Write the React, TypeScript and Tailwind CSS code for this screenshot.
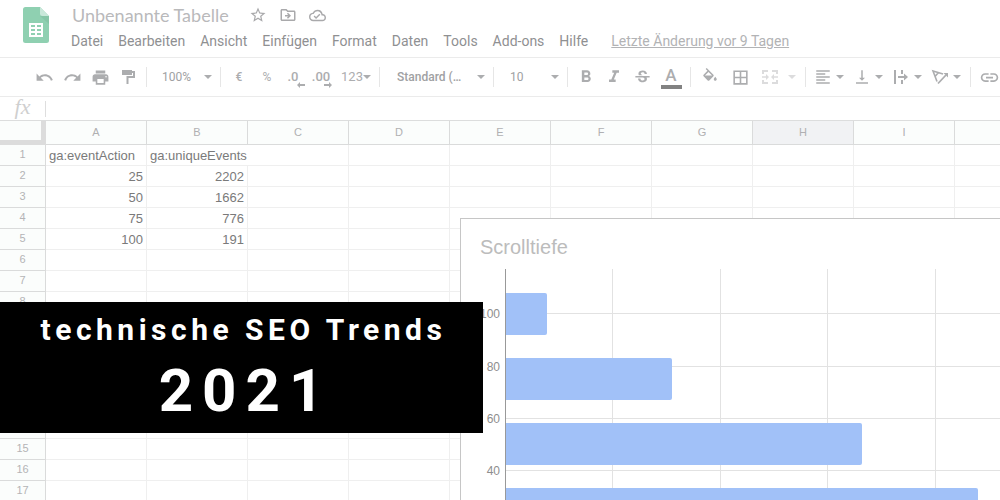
import type { ReactNode } from 'react';
import {
  MdBorderAll,
  MdFormatAlignLeft,
  MdFormatBold,
  MdFormatItalic,
  MdLink,
  MdOutlineCloudDone,
  MdOutlineDriveFileMove,
  MdPrint,
  MdRedo,
  MdStarBorder,
  MdStrikethroughS,
  MdUndo,
  MdVerticalAlignBottom,
} from 'react-icons/md';

const menus = ['Datei', 'Bearbeiten', 'Ansicht', 'Einfügen', 'Format', 'Daten', 'Tools', 'Add-ons', 'Hilfe'];
const columns = ['A', 'B', 'C', 'D', 'E', 'F', 'G', 'H', 'I', ''];
const cells = [
  ['ga:eventAction', 'ga:uniqueEvents'],
  ['25', '2202'],
  ['50', '1662'],
  ['75', '776'],
  ['100', '191'],
];
const rowCount = 17;

function SheetsLogo() {
  return (
    <svg width="26" height="36" viewBox="0 0 26 36" aria-hidden="true">
      <path d="M2.500 0H17L26 9V33.500A2.500 2.500 0 0 1 23.500 36H2.500A2.500 2.500 0 0 1 0 33.500V2.500A2.500 2.500 0 0 1 2.500 0Z" fill="#8fd0b1" />
      <path d="M17 9H26V17Z" fill="#86c6a7" />
      <path d="M17 0L26 9H19.500A2.500 2.500 0 0 1 17 6.500Z" fill="#c9e8da" />
      <path fillRule="evenodd" fill="#fff" d="M6 16H20V30H6ZM8 18V20H12V18ZM14 18V20H18V18ZM8 22V24H12V22ZM14 22V24H18V22ZM8 26V28H12V26ZM14 26V28H18V26Z" />
    </svg>
  );
}

function Caret() {
  return (
    <svg width="8" height="4" viewBox="0 0 8 4" fill="currentColor" className="shrink-0" aria-hidden="true">
      <path d="M0 0H8L4 4Z" />
    </svg>
  );
}

function PaintRoller() {
  return (
    <svg width="18" height="18" viewBox="0 0 18 18" aria-hidden="true">
      <path d="M3 2H13V7H3Z" fill="currentColor" />
      <path d="M12 4H15V9H8.500V16" fill="none" stroke="currentColor" strokeWidth="2" />
    </svg>
  );
}

function FillBucket() {
  return (
    <svg width="18" height="18" viewBox="0 0 24 24" fill="currentColor" aria-hidden="true">
      <path d="M16.560 8.940L7.620 0 6.210 1.410l2.380 2.380-5.150 5.150a1.490 1.490 0 0 0 0 2.120l5.500 5.500c.29.29.68.44 1.060.44s.77-.15 1.060-.44l5.500-5.500c.59-.58.59-1.530 0-2.120zM5.210 10L10 5.210 14.790 10H5.210zM19 11.500s-2 2.170-2 3.500c0 1.100.9 2 2 2s2-.9 2-2c0-1.330-2-3.500-2-3.500z" />
    </svg>
  );
}

function MergeIcon() {
  return (
    <svg width="18" height="18" viewBox="0 0 18 18" fill="none" stroke="currentColor" strokeWidth="2" aria-hidden="true">
      <path d="M2 6V3H7M11 3H16V6M2 12V15H7M11 15H16V12" />
      <path d="M1 9H6M17 9H12" strokeWidth="1.600" />
      <path d="M5 6L8 9L5 12ZM13 6L10 9L13 12Z" fill="currentColor" stroke="none" />
    </svg>
  );
}

function WrapIcon() {
  return (
    <svg width="18" height="18" viewBox="0 0 18 18" aria-hidden="true">
      <path d="M3 2V16M10 2V6M10 12V16M6 9H13" fill="none" stroke="currentColor" strokeWidth="2" />
      <path d="M12 5.500L16 9L12 12.500Z" fill="currentColor" />
    </svg>
  );
}

function RotateIcon() {
  return (
    <svg width="18" height="18" viewBox="0 0 18 18" fill="none" stroke="currentColor" aria-hidden="true">
      <path d="M6 13.500L2 3L12 6M4 8.500L7.500 4.500" strokeWidth="1.600" />
      <path d="M7 15.500L15 7" strokeWidth="1.800" />
      <path d="M12.500 5H17V9.500Z" fill="currentColor" stroke="none" />
    </svg>
  );
}

function DecimalArrow({ right = false }: { right?: boolean }) {
  return (
    <svg width="8" height="6" viewBox="0 0 8 6" fill="currentColor" aria-hidden="true">
      <path d={right ? 'M0 2H5V0L8 3L5 6V4H0Z' : 'M8 2H3V0L0 3L3 6V4H8Z'} />
    </svg>
  );
}

function Tool({ label, className = 'w-7', children }: { label: string; className?: string; children: ReactNode }) {
  return (
    <button type="button" aria-label={label} className={`flex h-7 shrink-0 items-center justify-center ${className}`}>
      {children}
    </button>
  );
}

function Separator() {
  return <span className="mx-1 h-5 w-px shrink-0 bg-[#e6e6e6]" />;
}

function Picker({ label, value, className }: { label: string; value: string; className: string }) {
  return (
    <label className={`relative flex h-7 shrink-0 items-center ${className}`}>
      <select aria-label={label} className="w-full appearance-none bg-transparent text-[#a0a1a3] outline-none">
        <option>{value}</option>
      </select>
      <span className="pointer-events-none absolute right-1">
        <Caret />
      </span>
    </label>
  );
}

function Header() {
  return (
    <header className="flex h-[58px] shrink-0 items-start border-b border-[#ebebeb] pt-[7px] pl-[23px]">
      <SheetsLogo />
      <div className="ml-[22px] whitespace-nowrap">
        <div className="flex h-4 items-center text-[#a9a9ab]">
          <input
            aria-label="Titel"
            defaultValue="Unbenannte Tabelle"
            className="w-[178px] pl-px font-['Lato',sans-serif] text-[18px] leading-4 text-[#b9b9bb] outline-none"
          />
          <div className="flex items-center gap-3">
            <button type="button" aria-label="Markieren"><MdStarBorder size={18} /></button>
            <button type="button" aria-label="Verschieben"><MdOutlineDriveFileMove size={18} /></button>
            <button type="button" aria-label="Dokumentstatus"><MdOutlineCloudDone size={17} /></button>
          </div>
        </div>
        <nav className="mt-2 flex items-center gap-[15px] text-[14px] leading-5 text-[#8f9092]">
          {menus.map((m) => (
            <button key={m} type="button">{m}</button>
          ))}
          <a href="#verlauf" className="ml-2 text-[#b2b3b5] underline">Letzte Änderung vor 9 Tagen</a>
        </nav>
      </div>
    </header>
  );
}

function Toolbar() {
  return (
    <div role="toolbar" className="flex h-[39px] shrink-0 items-center overflow-hidden border-b border-[#ebebeb] pl-[30px] text-[12px] text-[#acadaf]">
      <Tool label="Rückgängig"><MdUndo size={19} /></Tool>
      <Tool label="Wiederholen"><MdRedo size={19} /></Tool>
      <Tool label="Drucken"><MdPrint size={19} /></Tool>
      <Tool label="Format übertragen"><PaintRoller /></Tool>
      <Separator />
      <Picker label="Zoom" value="100%" className="w-[65px] pl-[11px]" />
      <Separator />
      <Tool label="Währung"><span className="font-medium">€</span></Tool>
      <Tool label="Prozent">%</Tool>
      <Tool label="Dezimalstelle löschen" className="w-7 pr-1">
        <span className="relative text-[13px] font-medium">.0<span className="absolute top-[15px] -right-1.5"><DecimalArrow /></span></span>
      </Tool>
      <Tool label="Dezimalstelle hinzufügen" className="w-7 pr-1">
        <span className="relative text-[13px] font-medium">.00<span className="absolute top-[15px] -right-0.5"><DecimalArrow right /></span></span>
      </Tool>
      <Tool label="Weitere Formate" className="w-[38px]"><span className="text-[13px]">123</span><Caret /></Tool>
      <Separator />
      <Picker label="Schriftart" value="Standard (…" className="w-[105px] pl-[13px] font-medium" />
      <Separator />
      <Picker label="Schriftgröße" value="10" className="w-[65px] pl-3" />
      <Separator />
      <Tool label="Fett"><MdFormatBold size={20} /></Tool>
      <Tool label="Kursiv"><MdFormatItalic size={20} /></Tool>
      <Tool label="Durchgestrichen"><MdStrikethroughS size={19} /></Tool>
      <Tool label="Textfarbe" className="w-[30px]">
        <span className="flex w-[21px] flex-col items-center border-b-4 border-[#828282] pb-px text-[17px] leading-[18px] font-medium">A</span>
      </Tool>
      <Separator />
      <Tool label="Füllfarbe" className="w-[30px]"><FillBucket /></Tool>
      <Tool label="Rahmen" className="w-[30px]"><MdBorderAll size={19} /></Tool>
      <Tool label="Zellen verbinden" className="w-[46px] gap-[9px] text-[#dcdcdd]"><MergeIcon /><Caret /></Tool>
      <Separator />
      <Tool label="Horizontal ausrichten" className="w-[39px] gap-1 pr-0.5"><MdFormatAlignLeft size={18} /><Caret /></Tool>
      <Tool label="Vertikal ausrichten" className="w-[39px] gap-1 pr-0.5"><MdVerticalAlignBottom size={18} /><Caret /></Tool>
      <Tool label="Textumbruch" className="w-[39px] gap-1 pr-0.5"><WrapIcon /><Caret /></Tool>
      <Tool label="Textdrehung" className="w-[39px] gap-1 pr-0.5"><RotateIcon /><Caret /></Tool>
      <Separator />
      <Tool label="Link einfügen"><MdLink size={21} /></Tool>
    </div>
  );
}

function FormulaBar() {
  return (
    <div className="flex h-6 shrink-0 items-center border-b border-[#dcdddd]">
      <label htmlFor="formula" className="w-[45px] shrink-0 pb-1 text-center font-['Liberation_Serif',serif] text-[22px] leading-5 text-[#cfcfcf] italic">
        fx
      </label>
      <input id="formula" className="h-4 min-w-0 flex-1 border-l border-[#dedede] px-1 text-[13px] outline-none" />
    </div>
  );
}

function Grid() {
  return (
    <table className="w-max table-fixed border-separate border-spacing-0 font-['Liberation_Sans',sans-serif]">
      <thead>
        <tr className="text-[11px] leading-[23px] text-[#b0b0b2]">
          <th className="h-6 w-[46px] min-w-[46px] border-r-[5px] border-b-[5px] border-[#dcdcdc] bg-[#fbfdfc] p-0" />
          {columns.map((c) => (
            <th
              key={c}
              scope="col"
              className={`h-6 w-[101px] min-w-[101px] border-r border-b border-[#dadbdb] p-0 font-normal ${c === 'H' ? 'bg-[#f1f2f4]' : 'bg-[#fbfdfc]'}`}
            >
              {c}
            </th>
          ))}
        </tr>
      </thead>
      <tbody>
        {Array.from({ length: rowCount }, (_, r) => (
          <tr key={r} className="text-[13px] leading-[18px] text-[#7a7a7a]">
            <th scope="row" className="h-[21px] border-r border-b border-[#dadbdb] bg-[#fbfdfc] px-0 pt-0 pb-0.5 text-[11px] leading-[18px] font-normal text-[#b4b4b6]">
              {r + 1}
            </th>
            {columns.map((c, i) => (
              <td
                key={c}
                className={`h-[21px] max-w-[101px] border-b border-[#efefef] px-[3px] pt-0.5 pb-0 whitespace-nowrap ${r === 0 ? 'text-left' : 'text-right'} ${r === 0 && i === 1 ? 'pr-1' : 'border-r'}`}
              >
                {cells[r]?.[i]}
              </td>
            ))}
          </tr>
        ))}
      </tbody>
    </table>
  );
}

const bars = [
  { y: 74, width: 42 },
  { y: 139, width: 167 },
  { y: 204, width: 357 },
  { y: 269, width: 473 },
];
const ticks = [
  { y: 95, label: '100' },
  { y: 148, label: '80' },
  { y: 200, label: '60' },
  { y: 252, label: '40' },
];

function ChartPanel() {
  return (
    <section className="absolute top-[97px] right-0 bottom-0 left-[460px] overflow-hidden border-t border-l border-[#c6c6c6] bg-white">
      <svg width="100%" height="100%" className="block font-['Liberation_Sans',sans-serif]" role="img" aria-label="Scrolltiefe">
        <text x="19" y="35" fontSize="20" fill="#bcbcbc">Scrolltiefe</text>
        <g fill="#e2e2e2">
          {[151, 259, 366, 474].map((x) => (
            <rect key={x} x={x} y="50" width="1" height="100%" />
          ))}
          {ticks.map((t) => (
            <rect key={t.label} x="45" y={t.y - 1} width="100%" height="1" />
          ))}
        </g>
        {ticks.map((t) => (
          <text key={t.label} x="39" y={t.y + 4} fontSize="12" textAnchor="end" fill="#8e8e8e">{t.label}</text>
        ))}
        {bars.map((b) => (
          <g key={b.y} fill="#a1c1f8">
            <rect x="44" y={b.y} width={b.width} height="42" rx="2" />
            <rect x="44" y={b.y} width="4" height="42" />
          </g>
        ))}
        <rect x="44" y="50" width="1" height="100%" fill="#999" />
      </svg>
    </section>
  );
}

function Banner() {
  return (
    <div className="absolute top-[181px] left-0 flex w-[483px] flex-col items-center bg-black pt-2 pb-[7px] font-bold text-white">
      <p className="pl-1 text-[30px] leading-10 tracking-[0.15em]">technische SEO Trends</p>
      <p className="pt-1.5 pl-2 text-[60px] leading-[70px] tracking-[0.15em]">2021</p>
    </div>
  );
}

export default function App() {
  return (
    <div className="flex h-screen flex-col overflow-hidden bg-white font-['Roboto',sans-serif]">
      <Header />
      <Toolbar />
      <FormulaBar />
      <main className="relative min-h-0 flex-1 overflow-hidden">
        <Grid />
        <ChartPanel />
        <Banner />
      </main>
    </div>
  );
}
